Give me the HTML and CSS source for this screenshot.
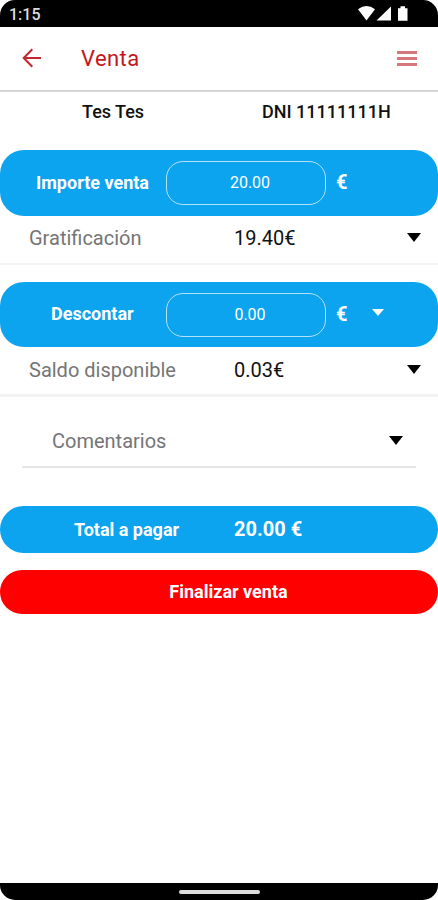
FILE: index.html
```html
<!DOCTYPE html>
<html lang="es">
<head>
    <meta charset="UTF-8">
    <title>Venta</title>
    <link rel="stylesheet" href="styles.css">
</head>
<body>
<div class="phone">
    <div class="status">
        <span class="time">1:15</span>
        <svg class="statusIcons" width="54" height="18" viewBox="0 0 54 18">
            <path d="M0 4.2Q8.5-2.2 17 4.2L8.5 15.5z"/>
            <path d="M33 1.5V15.5H18.5z"/>
            <path d="M40 3.2H42.5V1.2H47V3.2H49.5V15.7H40z"/>
        </svg>
    </div>
    <div class="header">
        <svg class="back" width="20" height="20" viewBox="0 0 20 20">
            <path d="M19 10H2M10.3 1.3L1.7 10L10.3 18.7"/>
        </svg>
        <h1>Venta</h1>
        <div class="menu"><i></i><i></i><i></i></div>
    </div>
    <div class="client">
        <span class="name">Tes Tes</span>
        <span class="dni">DNI 11111111H</span>
    </div>

    <div class="bar">
        <label class="lblImporte">Importe venta</label>
        <div class="field">20.00</div>
        <span class="euro">€</span>
    </div>
    <div class="row">
        <span class="key">Gratificación</span>
        <span class="value">19.40€</span>
        <i class="arrow"></i>
    </div>

    <div class="bar second">
        <label class="lblDescontar">Descontar</label>
        <div class="field">0.00</div>
        <span class="euro">€</span>
        <i class="arrow white"></i>
    </div>
    <div class="row last">
        <span class="key">Saldo disponible</span>
        <span class="value">0.03€</span>
        <i class="arrow"></i>
    </div>

    <div class="comments">
        <span class="key">Comentarios</span>
        <i class="arrow"></i>
    </div>

    <div class="total">
        <span class="lblTotal">Total a pagar</span>
        <span class="amount">20.00 €</span>
    </div>
    <div class="finish">Finalizar venta</div>
    <div class="nav"><i></i></div>
</div>
</body>
</html>
```
FILE: styles.css
```css
*{box-sizing:border-box;}
body{margin:0;background:#fff;font-family:Roboto,"Liberation Sans",sans-serif;}
.phone{width:438px;height:900px;display:flex;flex-direction:column;border-radius:15px;overflow:hidden;background:#fff;}
.phone>div{flex-shrink:0;}
.status{height:27px;background:#000;color:#ddd;display:flex;justify-content:space-between;padding:5px 26px 0 9px;}
.time{font-size:16px;line-height:20px;font-weight:500;}
.statusIcons{fill:#fff;}
.header{height:65px;display:flex;align-items:center;border-bottom:2px solid #d6d6d6;padding:0 21px 1px 22px;}
.back{fill:none;stroke:#c4262e;stroke-width:2;}
h1{margin:0 0 0 39px;padding-top:2px;font-size:22px;font-weight:400;line-height:26px;color:#c4161c;flex:1;letter-spacing:.4px;}
.menu{width:20px;display:flex;flex-direction:column;gap:3px;}
.menu i{height:3px;background:#d4787b;}
.client{height:58px;display:flex;padding-top:9px;font-size:18px;line-height:22px;font-weight:500;color:#111;}
.name{width:180px;padding-left:82px;}
.dni{padding-left:82px;}
.bar{height:66px;display:flex;align-items:center;background:#0ca3ef;border-radius:24px;color:#fff;font-size:18px;font-weight:700;}
.bar label{width:166px;padding-bottom:2px;}
.lblImporte{padding-left:36px;}
.lblDescontar{padding-left:51px;}
.field{width:160px;height:44px;border:1px solid #b5e2fb;border-radius:17px;font-size:16px;font-weight:400;line-height:42px;text-align:center;padding-left:8px;}
.euro{width:46px;padding:0 0 2px 10px;font-size:20px;}
.row{height:49px;display:flex;align-items:center;border-bottom:2px solid #f3f3f3;padding:0 17px 3px 29px;font-size:20px;}
.key{width:205px;color:#757575;}
.value{flex:1;color:#111;}
.arrow{border:7px solid transparent;border-top:9px solid #000;border-bottom:0;margin-bottom:2px;}
.white{border-width:6px;border-top:7px solid #fff;border-bottom:0;margin-bottom:4px;}
.second{margin-top:17px;height:65px;}
.last{border-bottom-width:3px;height:50px;padding-bottom:1px;}
.comments{margin:27px 22px 0;height:44px;border-bottom:2px solid #e6e6e6;display:flex;justify-content:space-between;padding:5px 13px 0 30px;font-size:20px;line-height:24px;}
.comments .arrow{margin-top:7px;}
.total{height:47px;margin-top:38px;display:flex;align-items:center;background:#0ca3ef;border-radius:24px;color:#fff;font-size:18px;font-weight:700;}
.lblTotal{width:234px;padding-left:74px;}
.amount{font-size:20px;padding-bottom:1px;}
.finish{height:44px;margin-top:17px;background:#f00;border-radius:22px;color:#fff;font-size:18px;line-height:44px;font-weight:700;text-align:center;padding-left:19px;}
.nav{height:17px;margin-top:auto;background:#000;display:flex;justify-content:center;padding-top:7px;}
.nav i{width:81px;height:4px;border-radius:2px;background:#ddd;}
```
